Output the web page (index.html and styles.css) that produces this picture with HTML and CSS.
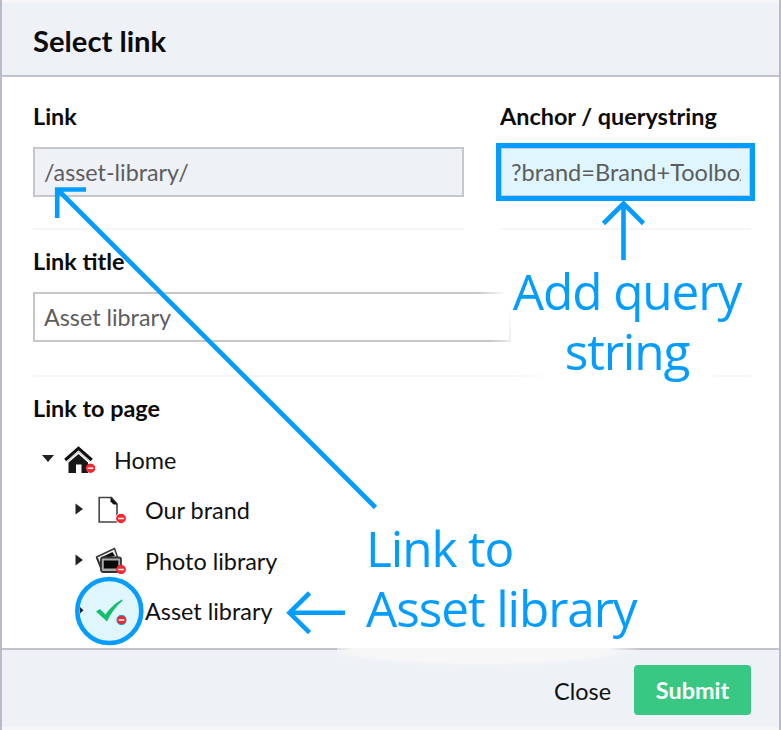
FILE: index.html
```html
<!DOCTYPE html>
<html lang="en">
<head>
<meta charset="utf-8">
<title>Select link</title>
<link rel="stylesheet" href="styles.css">
</head>
<body>
<svg class="defs" width="0" height="0" aria-hidden="true">
  <symbol id="minus" viewBox="0 0 10 10"><ellipse cx="5" cy="5" rx="4.9" ry="4.7" fill="#f0292f"/><path d="M2.2 5h5.6" stroke="#fff" stroke-width="1.6"/></symbol>
</svg>
<main class="dialog">
  <header class="head"><h1>Select link</h1></header>
  <section class="body">
    <div class="pair">
      <div class="field">
        <h2>Link</h2>
        <div class="input muted"><span>/asset-library/</span></div>
      </div>
      <div class="field anchor">
        <h2>Anchor / querystring</h2>
        <div class="input picked"><span class="clip">?brand=Brand+Toolbox</span></div>
      </div>
    </div>
    <div class="field title">
      <h2>Link title</h2>
      <div class="input short"><span>Asset library</span></div>
    </div>
    <div class="pages">
      <h2>Link to page</h2>
      <ul class="tree">
        <li class="home">
          <svg class="caret" width="14" height="12" viewBox="0 0 14 12"><path d="M1 2h12l-6 7z" fill="#222"/></svg>
          <svg class="icon" width="32" height="30" viewBox="0 0 32 30"><path d="M5.500 17.500 15.500 9 25 17.500v10.500h-6.500v-8.500h-5.500v8.500H5.500z" fill="#171717"/><path d="M2.200 15 15.500 3.300 28.800 15" fill="none" stroke="#111" stroke-width="3"/><path d="M4.200 16.500 15.500 6.700 26.800 16.500" fill="none" stroke="#bbb" stroke-width="1"/><use href="#minus" x="22.500" y="18.300" width="10" height="10"/></svg>
          <span>Home</span>
        </li>
        <li>
          <svg class="caret" width="9" height="12" viewBox="0 0 9 12"><path d="M.5 .5 8 6 .5 11.500z" fill="#222"/></svg>
          <svg class="icon" width="32" height="30" viewBox="0 0 32 30"><path d="M3.200 2.500H15.500l5.500 6.500v18H3.200z" fill="#fff" stroke="#444" stroke-width="1.600"/><path d="M14.500 2 21.800 9.500h-4.300l-3-3z" fill="#111"/><circle cx="25" cy="23.500" r="5.500" fill="#fff"/><use href="#minus" x="20" y="18.500" width="10" height="10"/></svg>
          <span>Our brand</span>
        </li>
        <li>
          <svg class="caret" width="9" height="12" viewBox="0 0 9 12"><path d="M.5 .5 8 6 .5 11.500z" fill="#222"/></svg>
          <svg class="icon" width="32" height="30" viewBox="0 0 32 30"><path d="M.500 11 18.500 2.500 21.500 11 5 15l-.5 5z" fill="#eee" stroke="#333" stroke-width="1.400"/><path d="M5 11.500 16.500 6l2.500 4-13 3z" fill="#111"/><path d="M1 12l4 10" stroke="#333" stroke-width="2"/><rect x="5" y="11.500" width="20" height="14.500" rx="2" fill="#aaa" stroke="#333" stroke-width="1.800"/><rect x="7.800" y="14.500" width="14.500" height="8" fill="#080808"/><use href="#minus" x="20" y="18.500" width="10" height="10"/></svg>
          <span>Photo library</span>
        </li>
        <li class="active">
          <svg class="caret" width="9" height="12" viewBox="0 0 9 12"></svg>
          <svg class="icon" width="32" height="30" viewBox="0 0 32 30"></svg>
          <span>Asset library</span>
        </li>
      </ul>
    </div>
  </section>
  <footer class="foot">
    <div class="haze"></div>
    <a class="close">Close</a>
    <button class="submit">Submit</button>
  </footer>
</main>
<svg class="marks" width="781" height="730" viewBox="0 0 781 730" fill="none" stroke="#049dff">
  <circle cx="109.300" cy="611" r="32" fill="#dff6fe" stroke-width="4.600"/>
  <path d="M80 607l3.500 3.300-3.500 3.300z" fill="#222" stroke="none"/>
  <path d="M96 611.500l4-2.500 5.500 5.500C110 608 116 602.500 122 599.500l.6 1.200C116 606 111 613 107 621.500z" fill="#13bf6b" stroke="none"/>
  <use href="#minus" x="116.500" y="615" width="10" height="10"/>
  <path d="M57 189 375.500 507.500M57.200 218V189.500H86" stroke-width="4.600"/>
  <path d="M623.500 260V204M603.500 223.500l20-20 20 20" stroke-width="4.600"/>
  <path d="M345 612.800H290M309.500 593l-20 19.800 20 19.800" stroke-width="4.600"/>
</svg>
<div class="note note-query">Add query<br>string</div>
<div class="note note-link">Link to<br>Asset library</div>
</body>
</html>
```

FILE: styles.css
```css
* { box-sizing: border-box; }
body { margin: 0; width: 781px; height: 730px; overflow: hidden; position: relative; font-family: Lato, sans-serif; color: #111; background: #fff; }
.defs { position: absolute; }
.dialog { width: 781px; height: 730px; display: flex; flex-direction: column; border-left: 2px solid #bcb9c9; border-right: 2px solid #bcb9c9; }
.head { height: 77px; padding: 18px 31px 0; background: #eef1f6; border-bottom: 2px solid #c3c1cc; border-top: 3px solid #f6f6f7; }
h1, h2 { margin: 0; white-space: nowrap; }
h1 { font-size: 29.2px; line-height: 39px; font-weight: 700; color: #0b0b0b; }
h2 { font-size: 23.4px; line-height: 30px; font-weight: 700; color: #0b0b0b; }
.body { height: 571px; padding: 24px 28px 0 31px; }
.pair { display: flex; gap: 36px; }
.field { border-bottom: 2px solid #f5f5f6; }
.pair .field { width: 431px; height: 129px; }
.pair .anchor { width: 251px; }
.pair { justify-content: space-between; }
.input { height: 50px; margin-top: 16px; border: 2px solid #c6c6cb; padding: 0 9px; font-size: 23.3px; line-height: 46px; color: #5d5d5f; white-space: nowrap; }
.muted { background: #eef1f6; }
.picked { width: 259px; height: 58px; margin: 12px 0 0 -4px; border: 5px solid #049dff; padding: 0 10px; line-height: 49px; background: #dff6fe; box-shadow: inset 0 0 0 1px #c9cdd2; }
.clip { display: block; width: 230px; overflow: hidden; font-size: 23.6px; }
.title { height: 147px; padding-top: 16px; border-bottom: 0; background: linear-gradient(90deg, #f5f5f6 0 480px, #fff 516px 672px, #f5f5f6 690px) 0 100% / 718px 2px no-repeat; }
.short { width: 478px; margin-top: 16px; border-image: linear-gradient(75deg, #c6c6cb 93%, #fff 99%) 2; }
.pages { padding-top: 16px; }
.tree { list-style: none; margin: 22px 0 0; padding: 0; }
.tree li { height: 51px; display: flex; align-items: flex-start; padding-left: 42px; font-size: 23.4px; line-height: 30px; white-space: nowrap; }
.tree li.home { padding-left: 8px; height: 50px; }
.tree li.active { line-height: 28px; }
.caret { margin-top: 8px; flex: none; }
.icon { flex: none; margin: 0 17px 0 12px; overflow: visible; }
.home .icon { margin: 0 19px 0 8px; }
.foot { position: relative; flex: 1; display: flex; align-items: flex-start; justify-content: flex-end; padding: 15px 28px 0; background: #eef1f6; border-top: 2px solid #c3c1cc; border-bottom: 3px solid #f6f6f7; }
.haze { position: absolute; left: 335px; top: -2px; width: 320px; height: 30px; background: radial-gradient(ellipse 50% 60% at 45% 0, #f7f7f7 80%, transparent); }
.close { position: relative; font-size: 23.4px; line-height: 52px; margin-right: 23px; }
.submit { position: relative; width: 117px; height: 50px; border: 0; border-radius: 4px; padding: 0; background: #39c884; color: #fff; font: 700 23.4px/50px Lato, sans-serif; }
.marks { position: absolute; left: 0; top: 0; }
.note { position: absolute; font: 400 49.5px/60px "Open Sans", sans-serif; letter-spacing: -1.1px; color: #049dff; white-space: nowrap; }
.note-query { left: 512px; top: 261px; width: 230px; text-align: center; }
.note-link { left: 366px; top: 518px; }
```
